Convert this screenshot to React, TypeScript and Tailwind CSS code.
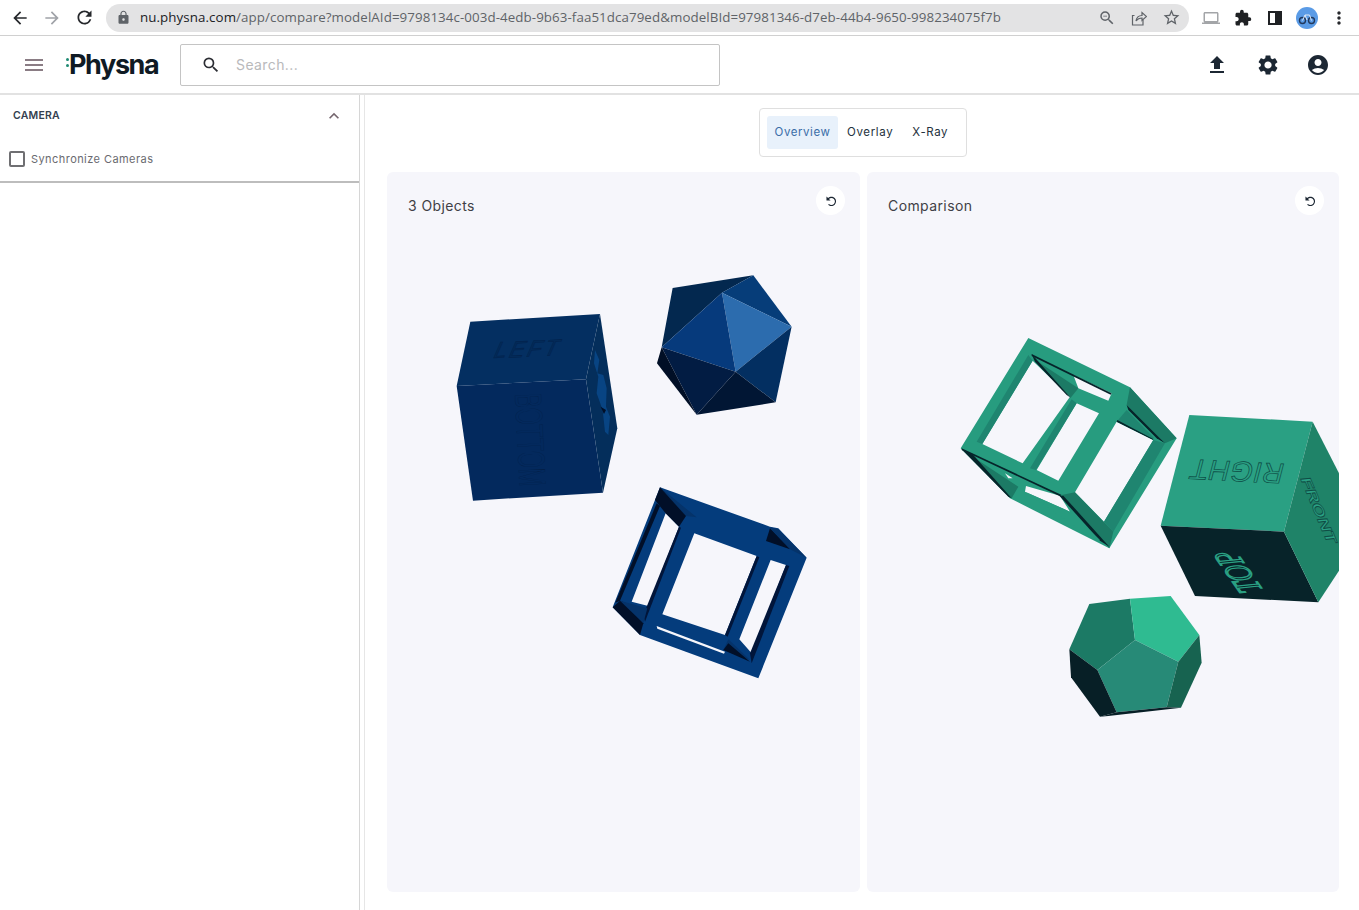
import { MdAccountCircle, MdArrowBack, MdExtension, MdFileUpload, MdKeyboardArrowUp, MdLock, MdMenu, MdMoreVert, MdOutlineLaptop, MdRefresh, MdReplay, MdSearch, MdSettings, MdStarBorder, MdZoomOut } from "react-icons/md";

const workSans = "font-['Inter','Open_Sans',sans-serif]";

// Chrome "share" glyph, no icon package has this exact one
function ShareIcon() {
  return (
    <svg width="16" height="16" viewBox="0 0 16 16" fill="none" stroke="#5f6368" strokeWidth="1.2">
      <path d="M3.5 5.5H1.5V15H12V10" />
      <path d="M5 11C5.5 7.5 8 5.5 11 5.5V2.5L15.5 6.5L11 10.5V8C8.5 8 6.5 9 5 11Z" />
    </svg>
  );
}

function Avatar() {
  return (
    <svg width="22" height="22" viewBox="0 0 22 22" className="shrink-0">
      <circle cx="11" cy="11" r="11" fill="#5a9be6" />
      <circle cx="6.5" cy="13.5" r="3" fill="none" stroke="#20385c" strokeWidth="1.4" />
      <circle cx="15.5" cy="13.5" r="3" fill="none" stroke="#20385c" strokeWidth="1.4" />
      <path d="M6.5 13.5L9 8H13.5L15.5 13.5M9 8L11 13" fill="none" stroke="#dfe9f5" strokeWidth="1" />
    </svg>
  );
}

function BrowserBar() {
  return (
    <div className="h-[36px] flex items-center border-b border-[#d0d0d0] bg-white">
      <div className="w-[104px] pl-[10px] flex items-center gap-[12px] shrink-0">
        <MdArrowBack size={20} color="#26282c" />
        <MdArrowBack size={20} color="#a0a3a8" className="rotate-180" />
        <MdRefresh size={21} color="#26282c" />
      </div>
      <div className="w-[1083px] ml-[2px] h-[28px] rounded-full bg-[#e3e3e4] flex items-center pl-[10px] pr-[8px] shrink-0">
        <MdLock size={15} color="#5f6368" className="shrink-0" />
        <div className="ml-[9px] text-[13.33px] tracking-[0.08px] whitespace-nowrap font-['Open_Sans',sans-serif] text-[#5f6368] w-[950px] overflow-hidden">
          <span className="text-[#202124]">nu.physna.com</span>/app/compare?modelAId=9798134c-003d-4edb-9b63-faa51dca79ed&amp;modelBId=97981346-d7eb-44b4-9650-998234075f7b
        </div>
        <div className="ml-auto flex items-center gap-[15px]">
          <MdZoomOut size={18} color="#5f6368" />
          <ShareIcon />
          <MdStarBorder size={19} color="#5f6368" />
        </div>
      </div>
      <div className="flex items-center ml-[13px]">
        <MdOutlineLaptop size={18} color="#a3a5a8" />
        <MdExtension size={18} color="#1f2124" className="ml-[14px]" />
        <div className="ml-[16px] w-[14px] h-[14px] border-[2px] border-[#1f2124] flex justify-end">
          <div className="w-[5px] bg-[#1f2124]" />
        </div>
        <div className="ml-[14px]">
          <Avatar />
        </div>
        <MdMoreVert size={20} color="#26282c" className="ml-[11px]" />
      </div>
    </div>
  );
}

function AppHeader() {
  return (
    <header className="h-[59px] flex items-center border-b-[2px] border-[#e2e2e2] bg-white">
      <MdMenu size={24} color="#8a7c84" className="ml-[22px] shrink-0" />
      <div className="ml-[20px] w-[94px] flex items-center shrink-0">
        <div className="flex flex-col gap-[3px] mb-[5px]">
          <div className="w-[3px] h-[3px] rounded-full bg-[#1f8a74]" />
          <div className="w-[3px] h-[3px] rounded-full bg-[#1f8a74]" />
        </div>
        <span className="text-[27px] leading-none font-bold tracking-[-1.4px] text-[#0f1a24] font-['Inter',sans-serif]">Physna</span>
      </div>
      <div className="ml-[20px] w-[540px] h-[42px] border border-[#c4c4c4] rounded-[2px] flex items-center pl-[20px] shrink-0">
        <MdSearch size={20} color="#2b2d33" />
        <span className={`ml-[15px] text-[14px] tracking-[0.4px] text-[#b9b9bb] ${workSans}`}>Search...</span>
      </div>
      <div className="ml-auto mr-[29px] flex items-center gap-[26.5px]">
        <MdFileUpload size={24} color="#1c2733" />
        <MdSettings size={24} color="#1c2733" />
        <MdAccountCircle size={24} color="#1c2733" />
      </div>
    </header>
  );
}

function Sidebar() {
  return (
    <aside className="w-[360px] shrink-0 border-r border-[#d6d6d6] bg-white">
      <div className="h-[88px] border-b-[2px] border-[#bdbdbd]">
        <div className="h-[42px] flex items-center justify-between pl-[13px] pr-[15px]">
          <span className={`text-[10.5px] font-semibold tracking-[0.2px] text-[#33404f] ${workSans}`}>CAMERA</span>
          <MdKeyboardArrowUp size={20} color="#75666e" />
        </div>
        <label className="mt-[14px] flex items-center pl-[9px]">
          <span className="w-[16px] h-[16px] border-[2px] border-[#6f6f72] rounded-[2px]" />
          <span className={`ml-[6px] text-[11px] tracking-[0.44px] text-[#6a6a70] ${workSans}`}>Synchronize Cameras</span>
        </label>
      </div>
    </aside>
  );
}

function Tabs() {
  return (
    <div className="w-[208px] h-[49px] mt-[13px] ml-[394px] border border-[#dfdfdf] rounded-[4px] bg-white flex items-center pl-[7px]">
      <div className="w-[71px] h-[33px] rounded-[3px] bg-[#e8f1fb] flex items-center justify-center pt-[1px]">
        <span className={`text-[11.5px] tracking-[0.55px] text-[#3b6ea8] ${workSans}`}>Overview</span>
      </div>
      <span className={`ml-[9px] pt-[1px] text-[11.5px] tracking-[0.65px] text-[#243240] ${workSans}`}>Overlay</span>
      <span className={`ml-[19px] pt-[1px] text-[11.5px] tracking-[0.6px] text-[#243240] ${workSans}`}>X-Ray</span>
    </div>
  );
}

function ResetButton() {
  return (
    <button className="absolute top-[14px] right-[15px] w-[29px] h-[29px] rounded-full bg-white flex items-center justify-center">
      <MdReplay size={14} color="#1c2733" className="-rotate-45" />
    </button>
  );
}

function BlueScene() {
  return (
    <svg viewBox="387 238 473 654" className="block w-[473px] h-[654px]">
      {/* solid cube */}
      <g transform="translate(440 260) scale(0.3333)">
        <polygon points="91,185 480,162 438,358 50,378" fill="#042f61" />
        <polygon points="50,378 438,358 489,698 99,722" fill="#03295d" />
        <polygon points="480,162 532,505 489,698 438,358" fill="#042e5b" />
        <path d="M465 270L478 300L472 340L490 345L500 385L498 440L510 470L505 525L495 515L488 450L470 400L475 350L462 310Z" fill="#0a4c90" opacity="0.75" />
        <path d="M482 440L498 450L492 462Z" fill="#010f28" />
        {/* icosahedron */}
        <polygon points="698,84 940,46 846,98 665,262" fill="#03284f" />
        <polygon points="940,46 1055,200 846,98" fill="#063d79" />
        <polygon points="846,98 1055,200 887,335" fill="#2c6cae" />
        <polygon points="665,262 846,98 887,335" fill="#063a7c" />
        <polygon points="1055,200 1007,427 887,335" fill="#032f61" />
        <polygon points="665,262 887,335 770,464" fill="#021c43" />
        <polygon points="887,335 1007,427 770,464" fill="#011634" />
        <polygon points="665,262 770,464 651,310" fill="#010f26" />
      </g>
      <text transform="matrix(1 -0.04 -0.25 1 493 358)" fontFamily="'Liberation Sans', sans-serif" fontStyle="italic" fontSize="23" letterSpacing="2.5" fill="#032a58" stroke="#02204a" strokeWidth="0.4">LEFT</text>
      <text transform="matrix(0.04 0.78 -1.35 0.08 515 394)" fontFamily="'Liberation Sans', sans-serif" fontSize="28" fill="#03295d" stroke="#021f48" strokeWidth="0.25">BOTTOM</text>
      {/* wire cube */}
      <g transform="translate(600 480) scale(0.3333)">
        <path fillRule="evenodd" fill="#043c7c" d="M180 22L510 140L535 145L620 233L475 595L120 465L38 382ZM283 160L470 228L375 465L187 403ZM197 100L237 140L145 378L95 365ZM512 240L558 255L455 520L418 478ZM170 438L375 515L372 521L172 446Z" />
        <polygon points="180,22 290,112 258,108" fill="#05336a" />
        <polygon points="180,22 258,108 237,140 197,100 165,60" fill="#010f28" />
        <polygon points="170,70 180,78 60,362 46,368" fill="#010f28" />
        <polygon points="237,140 243,143 135,425 130,405" fill="#01153a" />
        <polygon points="510,142 535,148 620,233 570,208" fill="#05336a" />
        <polygon points="510,145 570,208 498,183" fill="#010f28" />
        <polygon points="470,228 478,232 383,470 375,465" fill="#01153a" />
        <polygon points="558,255 568,258 455,550 450,520" fill="#01153a" />
        <polygon points="38,382 60,362 100,378 130,430 120,465" fill="#010f28" />
        <polygon points="60,362 142,385 130,430" fill="#05336a" />
        <polygon points="370,510 385,478 450,540" fill="#05336a" />
        <polygon points="370,510 450,545 385,490" fill="#010f28" />
      </g>
    </svg>
  );
}

function GreenScene() {
  return (
    <svg viewBox="867 238 472 654" className="block w-[472px] h-[654px]">
      {/* wire cube */}
      <g transform="translate(950 330) scale(0.3333)">
        <path fillRule="evenodd" fill="#279c7f" d="M235 24L540 172L680 325L478 655L180 505L32 355ZM248 92L360 200L218 400L97 342ZM380 220L447 250L325 452L260 420ZM370 135L485 190L475 212L385 175ZM500 275L610 330L462 575L375 487ZM228 468L330 497L360 545L225 485Z" />
        <polygon points="235,75 248,92 97,342 80,335" fill="#1f8570" />
        <polygon points="365,208 380,220 258,420 240,415" fill="#1f8570" />
        <polygon points="248,85 385,175 362,203" fill="#1c7a65" />
        <polygon points="245,72 362,203 350,195 255,95" fill="#06242a" />
        <polygon points="245,72 485,190 482,194 245,78" fill="#06242a" />
        <polygon points="540,172 680,325 645,340 530,225" fill="#1c7a65" />
        <polygon points="530,225 645,340 620,325 535,240" fill="#06242a" />
        <polygon points="500,275 530,240 610,322 610,330" fill="#1f8570" />
        <polygon points="500,275 610,330 608,326 502,270" fill="#06242a" />
        <polygon points="645,340 610,330 462,575 490,605" fill="#1f8570" />
        <polygon points="335,495 375,487 490,605 478,655" fill="#1c7a65" />
        <polygon points="328,497 340,497 478,650 450,632" fill="#06242a" />
        <polygon points="35,358 75,385 205,470 185,505" fill="#1c7a65" />
        <polygon points="35,358 70,375 185,505 175,500" fill="#06242a" />
        <polygon points="35,355 335,495 330,499 35,360" fill="#06242a" />
        <polygon points="165,430 188,445 175,445" fill="#f6f6fb" />
        <polygon points="225,485 360,545 450,630 430,628" fill="#279c7f" />
      </g>
      {/* solid cube */}
      <g transform="translate(1150 405) scale(0.3333)">
        <polygon points="118,30 488,50 402,380 32,362" fill="#2aa083" />
        <polygon points="32,362 402,380 505,592 135,573" fill="#072329" />
        <polygon points="488,50 585,240 585,470 505,592 402,380" fill="#1f8368" />
      </g>
      <text transform="matrix(-1 -0.05 0.25 -0.97 1286 464)" fontFamily="'Liberation Sans', sans-serif" fontSize="29" letterSpacing="0.7" fill="#2aa083" stroke="#0c4a44" strokeWidth="0.7">RIGHT</text>
      <text transform="matrix(-0.5 -0.72 1.1 -0.25 1263 590)" fontFamily="'Liberation Serif', serif" fontStyle="italic" fontSize="30" fill="none" stroke="#2aa083" strokeWidth="1.5">TOP</text>
      <text transform="matrix(0.5 1.2 -0.9 0.1 1300 478)" fontFamily="'Liberation Sans', sans-serif" fontWeight="700" fontSize="16" fill="#2aa083" stroke="#0f4d45" strokeWidth="0.8">FRONT</text>
      {/* dodecahedron */}
      <g transform="translate(1055 590) scale(0.3333)">
        <polygon points="103,42 225,26 240,150 127,240 43,178" fill="#1c7a65" />
        <polygon points="225,26 347,18 433,135 370,215 240,150" fill="#2fbb91" />
        <polygon points="127,240 240,150 370,215 335,352 185,367" fill="#278a77" />
        <polygon points="370,215 433,135 440,218 378,353 335,352" fill="#176350" />
        <polygon points="43,178 127,240 185,367 135,380 48,262" fill="#071f26" />
        <polygon points="185,367 335,352 378,353 160,378 135,380" fill="#071f26" />
      </g>
    </svg>
  );
}

function Panel({ title, children }: { title: string; children: React.ReactNode }) {
  return (
    <section className="relative h-[720px] rounded-[6px] bg-[#f6f6fb] overflow-hidden">
      <div className={`h-[66px] flex items-center pl-[21px] text-[14px] tracking-[0.4px] text-[#3f3f46] ${workSans}`}>{title}</div>
      {children}
      <ResetButton />
    </section>
  );
}

export default function App() {
  return (
    <div className="h-[910px] w-[1359px] overflow-hidden bg-white flex flex-col">
      <BrowserBar />
      <AppHeader />
      <div className="flex-1 flex min-h-0">
        <Sidebar />
        <main className="ml-[4px] flex-1 border-l border-[#e6e6e6]">
          <Tabs />
          <div className="ml-[22px] mt-[15px] grid grid-cols-[473px_472px] gap-[7px]">
            <Panel title="3 Objects">
              <BlueScene />
            </Panel>
            <Panel title="Comparison">
              <GreenScene />
            </Panel>
          </div>
        </main>
      </div>
    </div>
  );
}
